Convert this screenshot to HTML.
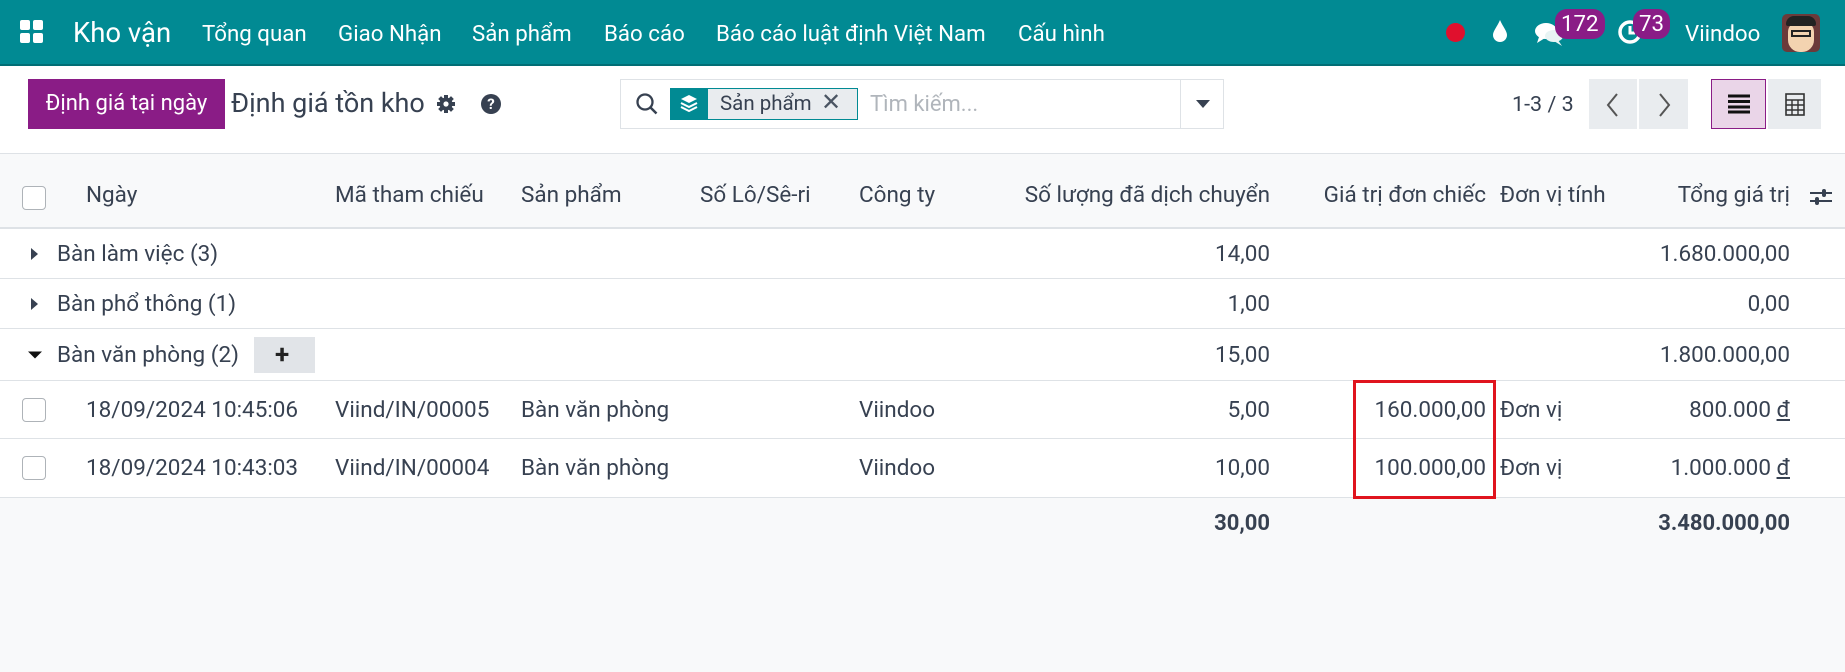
<!DOCTYPE html>
<html><head><meta charset="utf-8"><style>
*{box-sizing:border-box;margin:0;padding:0}
body{width:1845px;height:672px;position:relative;overflow:hidden;background:#f8f9fa;font-family:"Roboto","Liberation Sans","Noto Sans CJK SC",sans-serif;color:#374151}
.a{position:absolute;white-space:nowrap}
.nav{left:0;top:0;width:1845px;height:66px;background:#018a93;border-bottom:2px solid #016e75}
.nav .a{color:#fff;font-size:22.3px;top:21px}
.cp{left:0;top:66px;width:1845px;height:88px;background:#fff;border-bottom:1px solid #dee2e6}
.row{position:absolute;left:0;width:1845px;background:#fff;border-bottom:1px solid #dee2e6;font-size:22.5px;color:#374151}
.row .a{top:50%;transform:translateY(-50%)}
.r{text-align:right}
.cb{width:24px;height:24px;border:1px solid #aeb3b8;border-radius:4px;background:#fff;left:22px}
.badge{background:#8a1c86;color:#fff;font-size:15px;border-radius:12px;padding:2px 6px;}
</style></head><body>
<div class="a nav">
  <svg class="a" style="left:20px;top:20px" width="24" height="24" viewBox="0 0 24 24"><rect x="0" y="0" width="10" height="10" rx="2" fill="#fff"/><rect x="13" y="0" width="10" height="10" rx="2" fill="#fff"/><rect x="0" y="13" width="10" height="10" rx="2" fill="#fff"/><rect x="13" y="13" width="10" height="10" rx="2" fill="#fff"/></svg>
  <div class="a" style="left:73px;top:16px;font-size:27.5px">Kho vận</div>
  <div class="a" style="left:202px">Tổng quan</div>
  <div class="a" style="left:338px">Giao Nhận</div>
  <div class="a" style="left:472px">Sản phẩm</div>
  <div class="a" style="left:604px">Báo cáo</div>
  <div class="a" style="left:716px">Báo cáo luật định Việt Nam</div>
  <div class="a" style="left:1018px">Cấu hình</div>
  <div class="a" style="left:1446px;top:23px;width:19px;height:19px;border-radius:50%;background:#e0102d"></div>
  <svg class="a" style="left:1491px;top:19px" width="18" height="24" viewBox="0 0 18 24"><path d="M9 1 C6 8 2 12 2 16 a7 7 0 0 0 14 0 C16 12 12 8 9 1z" fill="#fff"/></svg>
  <svg class="a" style="left:1534px;top:20px" width="32" height="28" viewBox="0 0 32 28"><ellipse cx="12" cy="11" rx="11" ry="8" fill="#fff"/><path d="M5 17 L3 23 L11 18z" fill="#fff"/><ellipse cx="20" cy="16" rx="9" ry="6" fill="#e8f4f4"/><path d="M24 20 L28 26 L20 21z" fill="#e8f4f4"/></svg>
  <div class="a badge" style="left:1555px;top:9px">172</div>
  <svg class="a" style="left:1617px;top:19px" width="26" height="26" viewBox="0 0 26 26"><circle cx="13" cy="13" r="10" stroke="#fff" stroke-width="3.5" fill="none"/><path d="M13 7v7h5" stroke="#fff" stroke-width="3" fill="none"/></svg>
  <div class="a badge" style="left:1633px;top:9px">73</div>
  <div class="a" style="left:1685px">Viindoo</div>
  <div class="a" style="left:1782px;top:14px;width:38px;height:38px;border-radius:5px;background:#6b3a3a;overflow:hidden"><div style="position:absolute;left:6px;top:8px;width:26px;height:30px;border-radius:10px 10px 12px 12px;background:#f3d3b0"></div><div style="position:absolute;left:4px;top:2px;width:30px;height:10px;border-radius:8px 8px 2px 2px;background:#222"></div><div style="position:absolute;left:9px;top:16px;width:20px;height:7px;border:2px solid #222"></div></div>
</div>
<div class="a cp">
  <div class="a" style="left:28px;top:13px;width:197px;height:50px;background:#8a1c86;color:#fff;font-size:22px;line-height:50px;text-align:center">Định giá tại ngày</div>
  <div class="a" style="left:231px;top:21px;font-size:27px;color:#374151">Định giá tồn kho</div>
  <svg class="a" style="left:436px;top:28px" width="20" height="20" viewBox="0 0 20 20"><circle cx="10" cy="10" r="6.5" fill="#374151"/><g stroke="#374151" stroke-width="4"><path d="M10 1v18M1 10h18M3.6 3.6l12.8 12.8M16.4 3.6L3.6 16.4"/></g><circle cx="10" cy="10" r="2.6" fill="#fff"/></svg>
  <div class="a" style="left:481px;top:28px;width:20px;height:20px;border-radius:50%;background:#374151;color:#fff;font-size:15px;font-weight:bold;text-align:center;line-height:20px">?</div>
  <div class="a" style="left:620px;top:13px;width:604px;height:50px;border:1px solid #dee2e6;background:#fff"></div>
  <svg class="a" style="left:635px;top:26px" width="24" height="24" viewBox="0 0 24 24"><circle cx="10" cy="10" r="7.5" stroke="#374151" stroke-width="2.3" fill="none"/><path d="M15.5 15.5l6 6" stroke="#374151" stroke-width="2.5"/></svg>
  <div class="a" style="left:670px;top:22px;width:188px;height:32px;border:1px solid #018a93;background:#e9ecef"></div>
  <div class="a" style="left:670px;top:22px;width:38px;height:32px;background:#018a93"></div>
  <svg class="a" style="left:678px;top:27px" width="22" height="22" viewBox="0 0 22 22"><path d="M11 2l8 4-8 4-8-4z" fill="#fff"/><path d="M3 10l8 4 8-4M3 14l8 4 8-4" stroke="#fff" stroke-width="2" fill="none"/></svg>
  <div class="a" style="left:720px;top:26px;font-size:20.5px;color:#374151">Sản phẩm</div>
  <div class="a" style="left:821px;top:22px;font-size:24px;color:#4b5563">✕</div>
  <div class="a" style="left:870px;top:26px;font-size:22px;color:#b0b5bb">Tìm kiếm...</div>
  <div class="a" style="left:1180px;top:14px;width:1px;height:48px;background:#dee2e6"></div>
  <div class="a" style="left:1196px;top:34px;width:0;height:0;border-left:7px solid transparent;border-right:7px solid transparent;border-top:8px solid #374151"></div>
  <div class="a" style="left:1512px;top:26px;font-size:21.5px">1-3 / 3</div>
  <div class="a" style="left:1589px;top:13px;width:48px;height:50px;background:#e9ecef"></div>
  <div class="a" style="left:1639px;top:13px;width:49px;height:50px;background:#e9ecef"></div>
  <svg class="a" style="left:1604px;top:26px" width="18" height="26" viewBox="0 0 18 26"><path d="M13 2L4 13l9 11" stroke="#555" stroke-width="2" fill="none"/></svg>
  <svg class="a" style="left:1655px;top:26px" width="18" height="26" viewBox="0 0 18 26"><path d="M5 2l9 11-9 11" stroke="#555" stroke-width="2" fill="none"/></svg>
  <div class="a" style="left:1711px;top:13px;width:55px;height:50px;background:#ead5e8;border:1px solid #8a1c86"></div>
  <svg class="a" style="left:1728px;top:28px" width="22" height="20" viewBox="0 0 22 20"><path d="M0 2h22M0 7.5h22M0 13h22M0 18h22" stroke="#111" stroke-width="3"/></svg>
  <div class="a" style="left:1768px;top:13px;width:53px;height:50px;background:#e9ecef"></div>
  <svg class="a" style="left:1784px;top:27px" width="22" height="23" viewBox="0 0 22 23"><rect x="2" y="1" width="18" height="21" stroke="#333" stroke-width="1.6" fill="none"/><path d="M2 7h18M2 12h18M2 17h18M8 7v15M14 7v15" stroke="#333" stroke-width="1.4"/></svg>
</div>
<!-- header -->
<div class="row" style="top:154px;height:75px;background:#f8f9fa;border-bottom:2px solid #dee2e6">
  <div class="a cb" style="margin-top:7px"></div>
  <div class="a" style="left:86px;margin-top:4px">Ngày</div>
  <div class="a" style="left:335px;margin-top:4px">Mã tham chiếu</div>
  <div class="a" style="left:521px;margin-top:4px">Sản phẩm</div>
  <div class="a" style="left:700px;margin-top:4px">Số Lô/Sê-ri</div>
  <div class="a" style="left:859px;margin-top:4px">Công ty</div>
  <div class="a r" style="right:575px;margin-top:4px">Số lượng đã dịch chuyển</div>
  <div class="a r" style="right:359px;margin-top:4px">Giá trị đơn chiếc</div>
  <div class="a" style="left:1500px;margin-top:4px">Đơn vị tính</div>
  <div class="a r" style="right:55px;margin-top:4px">Tổng giá trị</div>
  <svg class="a" style="left:1809px;top:32px;transform:none" width="24" height="22" viewBox="0 0 24 22"><path d="M1 7h22M1 15h22" stroke="#374151" stroke-width="2"/><rect x="13" y="3" width="4" height="8" rx="2" fill="#374151"/><rect x="6" y="11" width="4" height="8" rx="2" fill="#374151"/></svg>
</div>
<div class="row" style="top:229px;height:50px">
  <div class="a" style="left:31px;width:0;height:0;border-top:6px solid transparent;border-bottom:6px solid transparent;border-left:7px solid #374151"></div>
  <div class="a" style="left:57px">Bàn làm việc (3)</div>
  <div class="a r" style="right:575px">14,00</div>
  <div class="a r" style="right:55px">1.680.000,00</div>
</div>
<div class="row" style="top:279px;height:50px">
  <div class="a" style="left:31px;width:0;height:0;border-top:6px solid transparent;border-bottom:6px solid transparent;border-left:7px solid #374151"></div>
  <div class="a" style="left:57px">Bàn phổ thông (1)</div>
  <div class="a r" style="right:575px">1,00</div>
  <div class="a r" style="right:55px">0,00</div>
</div>
<div class="row" style="top:329px;height:52px">
  <div class="a" style="left:28px;width:0;height:0;border-left:7px solid transparent;border-right:7px solid transparent;border-top:7px solid #111"></div>
  <div class="a" style="left:57px">Bàn văn phòng (2)</div>
  <div class="a" style="left:254px;width:61px;height:36px;background:#e1e4e8"></div>
  <div class="a" style="left:275px;font-size:26px;font-weight:bold;color:#222">+</div>
  <div class="a r" style="right:575px">15,00</div>
  <div class="a r" style="right:55px">1.800.000,00</div>
</div>
<div class="row" style="top:381px;height:58px">
  <div class="a cb"></div>
  <div class="a" style="left:86px">18/09/2024 10:45:06</div>
  <div class="a" style="left:335px">Viind/IN/00005</div>
  <div class="a" style="left:521px">Bàn văn phòng</div>
  <div class="a" style="left:859px">Viindoo</div>
  <div class="a r" style="right:575px">5,00</div>
  <div class="a r" style="right:359px">160.000,00</div>
  <div class="a" style="left:1500px">Đơn vị</div>
  <div class="a r" style="right:55px">800.000 <u>đ</u></div>
</div>
<div class="row" style="top:439px;height:59px">
  <div class="a cb"></div>
  <div class="a" style="left:86px">18/09/2024 10:43:03</div>
  <div class="a" style="left:335px">Viind/IN/00004</div>
  <div class="a" style="left:521px">Bàn văn phòng</div>
  <div class="a" style="left:859px">Viindoo</div>
  <div class="a r" style="right:575px">10,00</div>
  <div class="a r" style="right:359px">100.000,00</div>
  <div class="a" style="left:1500px">Đơn vị</div>
  <div class="a r" style="right:55px">1.000.000 <u>đ</u></div>
</div>
<div class="a r" style="right:575px;top:511px;font-size:22px;font-weight:bold">30,00</div>
<div class="a r" style="right:55px;top:511px;font-size:22px;font-weight:bold">3.480.000,00</div>
<div class="a" style="left:1353px;top:380px;width:143px;height:119px;border:3px solid #e0141e"></div>
</body></html>
